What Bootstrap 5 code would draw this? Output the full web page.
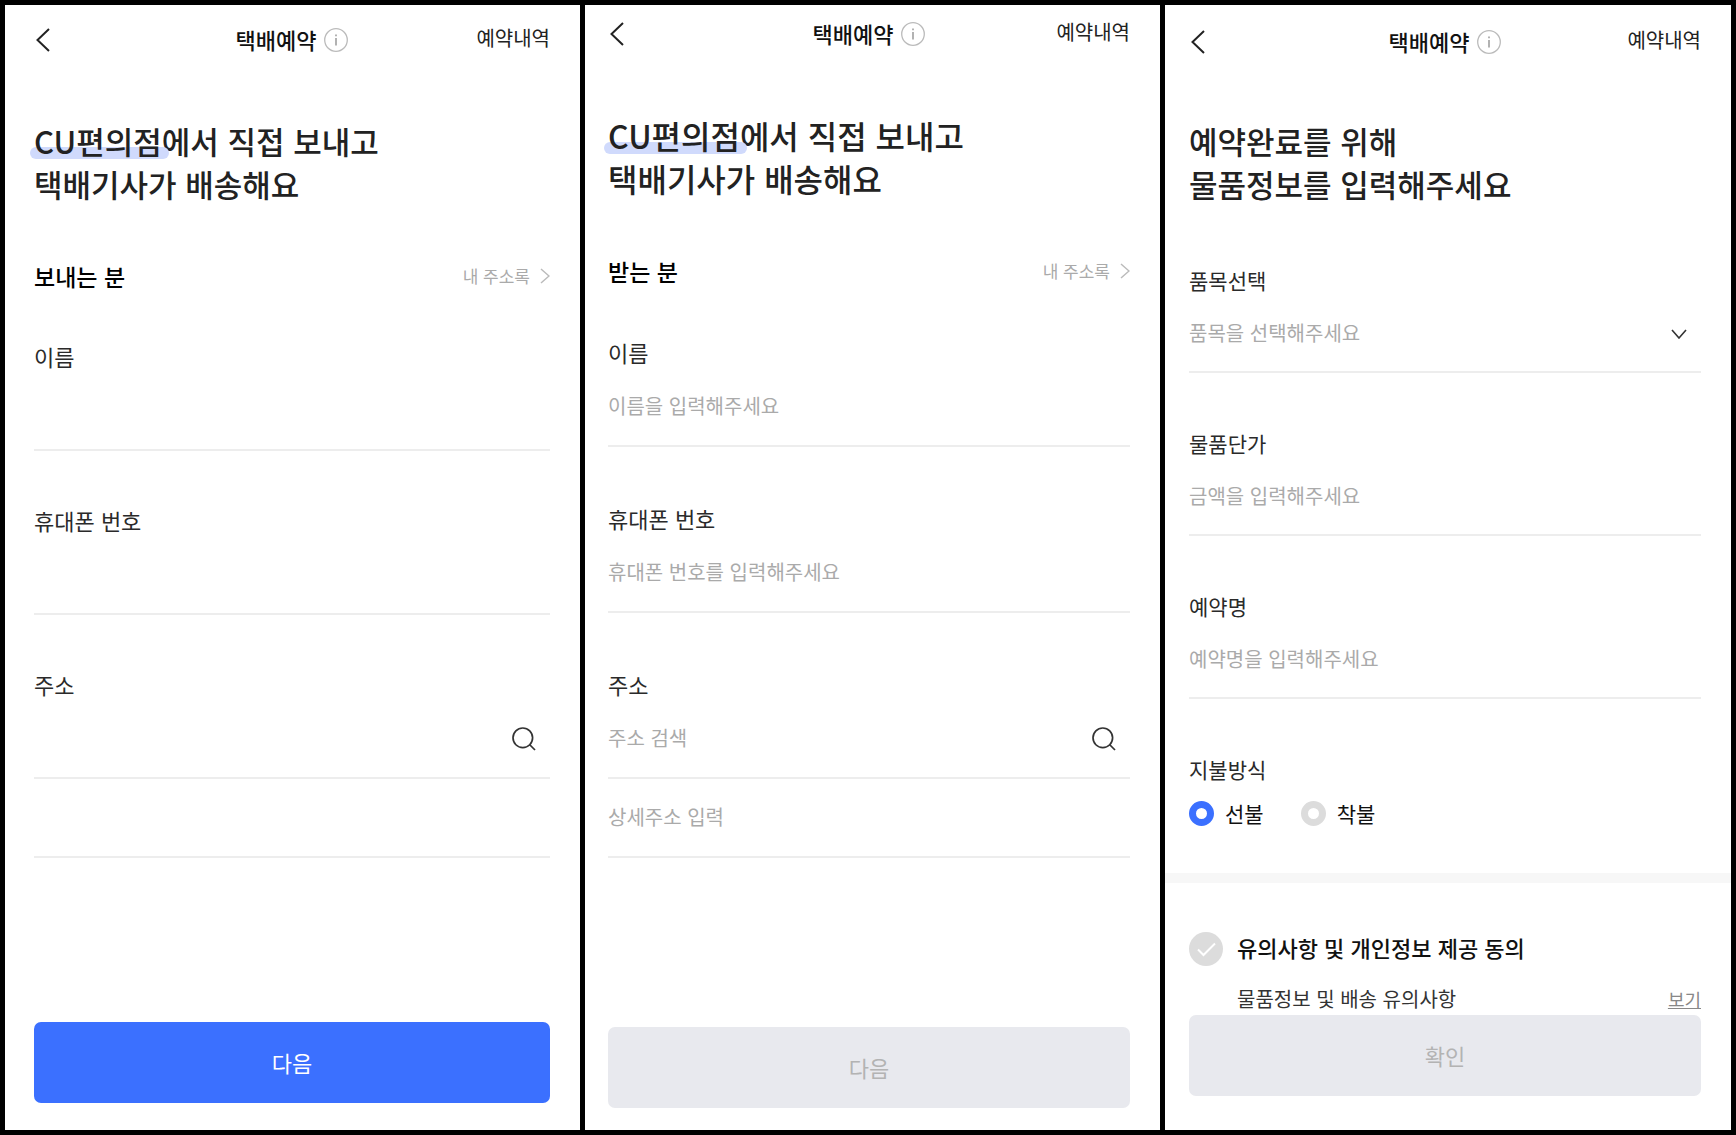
<!DOCTYPE html>
<html lang="ko">
<head>
<meta charset="utf-8">
<meta name="viewport" content="width=device-width, initial-scale=1">
<title>택배예약</title>
<link href="https://cdn.jsdelivr.net/npm/bootstrap@5.3.0/dist/css/bootstrap.min.css" rel="stylesheet">
<style>
  body { font-family: "Noto Sans CJK KR", sans-serif; color: #222; background: #000; }
  .boards { display: grid; grid-template-columns: 575fr 575fr 566fr; gap: 5px; padding: 5px; min-height: 100vh; }
  .screen { --side: 29px; --label: 22px; --title: 31px; --input: 79px; --gap: 53px; --first: 48px; --head: 63px;
    background: #fff; padding: 19px 30px 27px var(--side); min-width: 0; }
  .screen-to { --side: 23px; --title: 32px; --gap: 55px; --first: 49px; --head: 64px; padding-top: 13px; padding-bottom: 22px; }
  .screen-item { --side: 24px; --label: 21px; --input: 77px; --gap: 54px; --first: 59px; --head: 61px; padding-top: 21px; padding-bottom: 34px; }
  .topbar { height: 32px; margin-bottom: var(--head); }
  .side-cell { flex: 1 1 0; }
  .icon-btn { display: inline-flex; border: 0; background: none; padding: 0; color: #222; }
  .back-btn { padding-left: 2px; }
  .lift { padding-bottom: 3px; }
  .bar-title { font-size: 22px; line-height: 32px; font-weight: 500; color: #111; }
  .bar-link { font-size: 20px; line-height: 28px; color: #222; }
  .headline { font-size: var(--title); line-height: 43px; font-weight: 500; color: #222; margin: 0; }
  .hl { position: relative; z-index: 0; }
  .hl::before { content: ""; position: absolute; z-index: -1; left: -4px; right: -7px; bottom: 4px; height: 12px; border-radius: 6px; background: #d0dafc; }
  .who { margin-top: 55px; }
  .who-name { font-size: 23px; line-height: 32px; font-weight: 500; color: #000; margin: 0; }
  .book-link { font-size: 17px; line-height: 32px; color: #aaa; gap: 10px; }
  .fields { display: flex; flex-direction: column; gap: var(--gap); margin-top: var(--first); }
  .field-label { display: block; font-size: var(--label); line-height: 32px; color: #2a2a2a; }
  .line-box { display: flex; align-items: center; height: var(--input); padding-bottom: 2px; border-bottom: 2px solid #ededed; }
  .line-box .form-control, .line-box .form-select { border: 0; border-radius: 0; background: none; box-shadow: none; padding: 0; font-size: 20px; line-height: 32px; color: #222; }
  .line-box .form-control::placeholder { color: #aaa; opacity: 1; }
  .line-box .form-select { color: #aaa; }
  .end-icon { flex: none; margin-right: 14px; margin-top: 2px; }
  .pay-row { gap: 37px; margin-top: 12px; }
  .pay-opt { gap: 11px; font-size: 21px; line-height: 32px; color: #111; }
  .pay-opt .form-check-input { width: 25px; height: 25px; margin: 0; border: 7px solid #dcdcdc; background: #fff; box-shadow: none; }
  .pay-opt .form-check-input:checked { border-color: #3b70ff; background: #fff; }
  .band { height: 10px; background: #f7f7f7; margin: 44px -30px 49px calc(0px - var(--side)); }
  .agree { gap: 14px; font-size: 22px; line-height: 31px; font-weight: 500; color: #111; }
  .agree .form-check-input { flex: none; width: 34px; height: 34px; margin: 0; border: 0; border-radius: 50%; background: #dcdcdc url("data:image/svg+xml,%3Csvg xmlns='http://www.w3.org/2000/svg' viewBox='0 0 34 34'%3E%3Cpath d='M9 17.5l5.500 5.500L26 11.500' fill='none' stroke='%23fff' stroke-width='2'/%3E%3C/svg%3E") center / contain no-repeat; }
  .terms { margin-top: 17px; padding-left: 48px; font-size: 20px; line-height: 32px; color: #333; }
  .terms a { font-size: 18px; color: #888; }
  .cta { height: 81px; border: 0; border-radius: 7px; font-size: 22px; background: #3b70ff; color: #fff; }
  .cta:disabled { background: #e8e9ee; color: #b3b3b3; opacity: 1; }
</style>
<script src="https://cdn.jsdelivr.net/npm/bootstrap@5.3.0/dist/js/bootstrap.bundle.min.js"></script>
</head>
<body>
<svg class="d-none" aria-hidden="true">
  <symbol id="i-back" viewBox="0 0 14 24"><path d="M13 1L1.500 12 13 23" fill="none" stroke="currentColor" stroke-width="2"/></symbol>
  <symbol id="i-info" viewBox="0 0 24 24"><circle cx="12" cy="12" r="11.300" fill="none" stroke="#bbb" stroke-width="1.300"/><path d="M12 10v7.500M12 6.500v1.700" stroke="#999" stroke-width="1.500"/></symbol>
  <symbol id="i-next" viewBox="0 0 10 16"><path d="M1 1l8 7-8 7" fill="none" stroke="#bbb" stroke-width="1.500"/></symbol>
  <symbol id="i-search" viewBox="0 0 24 24"><circle cx="10.800" cy="10.800" r="9.800" fill="none" stroke="#333" stroke-width="1.700"/><path d="M17.500 17.500l5.500 5.500" stroke="#333" stroke-width="1.700"/></symbol>
  <symbol id="i-down" viewBox="0 0 16 10"><path d="M1 1l7 8 7-8" fill="none" stroke="#333" stroke-width="1.600"/></symbol>
</svg>
<main class="boards">
  <form class="screen d-flex flex-column">
    <header class="topbar d-flex align-items-center">
      <div class="side-cell d-flex"><button type="button" class="icon-btn back-btn" aria-label="뒤로"><svg width="14" height="24"><use href="#i-back"/></svg></button></div>
      <div class="d-flex align-items-center gap-2"><span class="bar-title lift">택배예약</span><button type="button" class="icon-btn" aria-label="안내"><svg width="24" height="24"><use href="#i-info"/></svg></button></div>
      <div class="side-cell text-end pb-1"><a href="#" class="bar-link text-decoration-none">예약내역</a></div>
    </header>
    <h1 class="headline"><span class="hl">CU편의점</span>에서 직접 보내고<br>택배기사가 배송해요</h1>
    <div class="who d-flex justify-content-between">
      <h2 class="who-name">보내는 분</h2>
      <a href="#" class="book-link d-flex align-items-center text-decoration-none">내 주소록<svg width="10" height="16"><use href="#i-next"/></svg></a>
    </div>
    <div class="fields">
      <div><label class="field-label" for="from-name">이름</label><div class="line-box"><input class="form-control" id="from-name" type="text"></div></div>
      <div><label class="field-label" for="from-tel">휴대폰 번호</label><div class="line-box"><input class="form-control" id="from-tel" type="tel"></div></div>
      <div><label class="field-label" for="from-addr">주소</label>
        <div class="line-box"><input class="form-control" id="from-addr" type="text"><button type="button" class="icon-btn end-icon" aria-label="주소 검색"><svg width="24" height="24"><use href="#i-search"/></svg></button></div>
        <div class="line-box"><input class="form-control" type="text" aria-label="상세주소"></div></div>
    </div>
    <button type="button" class="btn cta w-100 mt-auto">다음</button>
  </form>

  <form class="screen screen-to d-flex flex-column">
    <header class="topbar d-flex align-items-center">
      <div class="side-cell d-flex"><button type="button" class="icon-btn back-btn" aria-label="뒤로"><svg width="14" height="24"><use href="#i-back"/></svg></button></div>
      <div class="d-flex align-items-center gap-2"><span class="bar-title lift">택배예약</span><button type="button" class="icon-btn" aria-label="안내"><svg width="24" height="24"><use href="#i-info"/></svg></button></div>
      <div class="side-cell text-end pb-1"><a href="#" class="bar-link text-decoration-none">예약내역</a></div>
    </header>
    <h1 class="headline"><span class="hl">CU편의점</span>에서 직접 보내고<br>택배기사가 배송해요</h1>
    <div class="who d-flex justify-content-between">
      <h2 class="who-name">받는 분</h2>
      <a href="#" class="book-link d-flex align-items-center text-decoration-none">내 주소록<svg width="10" height="16"><use href="#i-next"/></svg></a>
    </div>
    <div class="fields">
      <div><label class="field-label" for="to-name">이름</label><div class="line-box"><input class="form-control" id="to-name" type="text" placeholder="이름을 입력해주세요"></div></div>
      <div><label class="field-label" for="to-tel">휴대폰 번호</label><div class="line-box"><input class="form-control" id="to-tel" type="tel" placeholder="휴대폰 번호를 입력해주세요"></div></div>
      <div><label class="field-label" for="to-addr">주소</label>
        <div class="line-box"><input class="form-control" id="to-addr" type="text" placeholder="주소 검색"><button type="button" class="icon-btn end-icon" aria-label="주소 검색"><svg width="24" height="24"><use href="#i-search"/></svg></button></div>
        <div class="line-box"><input class="form-control" type="text" aria-label="상세주소" placeholder="상세주소 입력"></div></div>
    </div>
    <button type="button" class="btn cta w-100 mt-auto" disabled>다음</button>
  </form>

  <form class="screen screen-item d-flex flex-column">
    <header class="topbar d-flex align-items-center">
      <div class="side-cell d-flex"><button type="button" class="icon-btn back-btn" aria-label="뒤로"><svg width="14" height="24"><use href="#i-back"/></svg></button></div>
      <div class="d-flex align-items-center gap-2"><span class="bar-title lift">택배예약</span><button type="button" class="icon-btn" aria-label="안내"><svg width="24" height="24"><use href="#i-info"/></svg></button></div>
      <div class="side-cell text-end pb-1"><a href="#" class="bar-link text-decoration-none">예약내역</a></div>
    </header>
    <h1 class="headline">예약완료를 위해<br>물품정보를 입력해주세요</h1>
    <div class="fields">
      <div><label class="field-label" for="item-kind">품목선택</label><div class="line-box"><select class="form-select" id="item-kind"><option>품목을 선택해주세요</option></select><svg class="end-icon" width="16" height="10"><use href="#i-down"/></svg></div></div>
      <div><label class="field-label" for="item-price">물품단가</label><div class="line-box"><input class="form-control" id="item-price" type="text" placeholder="금액을 입력해주세요"></div></div>
      <div><label class="field-label" for="item-name">예약명</label><div class="line-box"><input class="form-control" id="item-name" type="text" placeholder="예약명을 입력해주세요"></div></div>
      <div role="radiogroup" aria-labelledby="pay-title">
        <span class="field-label" id="pay-title">지불방식</span>
        <div class="pay-row d-flex">
          <label class="pay-opt d-flex align-items-center"><input class="form-check-input" type="radio" name="pay" checked>선불</label>
          <label class="pay-opt d-flex align-items-center"><input class="form-check-input" type="radio" name="pay">착불</label>
        </div>
      </div>
    </div>
    <div class="band"></div>
    <label class="agree d-flex align-items-center"><input class="form-check-input" type="checkbox"><span class="lift">유의사항 및 개인정보 제공 동의</span></label>
    <div class="terms d-flex justify-content-between"><span>물품정보 및 배송 유의사항</span><a href="#">보기</a></div>
    <button type="button" class="btn cta w-100 mt-auto" disabled>확인</button>
  </form>
</main>
</body>
</html>
